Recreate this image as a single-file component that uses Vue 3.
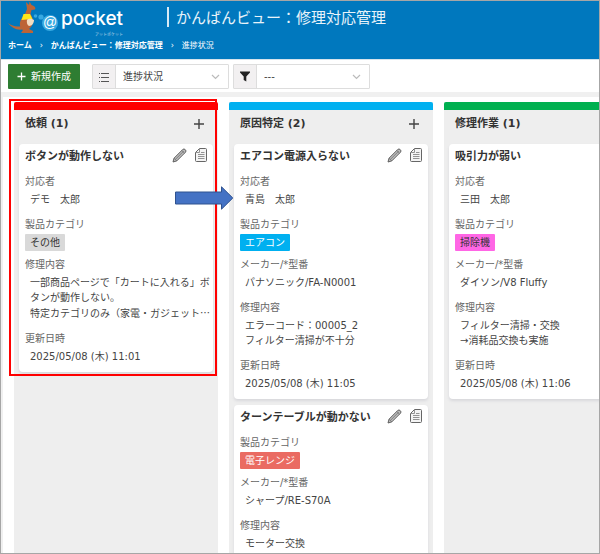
<script setup>
import { ref } from 'vue'

const groupBy = ref('進捗状況')
const filter = ref('---')

const columns = ref([
  {
    id: 1, name: '依頼', color: '#ff0000', marked: true,
    cards: [
      {
        id: 11, title: 'ボタンが動作しない',
        fields: [
          { label: '対応者', lines: ['デモ　太郎'] },
          { label: '製品カテゴリ', tag: 'その他', tagClass: 'gray' },
          { label: '修理内容', lines: ['一部商品ページで「カートに入れる」ボ', 'タンが動作しない。', '特定カテゴリのみ（家電・ガジェット'], more: true },
          { label: '更新日時', lines: ['2025/05/08 (木) 11:01'] }
        ]
      }
    ]
  },
  {
    id: 2, name: '原因特定', color: '#00b0f0',
    cards: [
      {
        id: 21, title: 'エアコン電源入らない',
        fields: [
          { label: '対応者', lines: ['青島　太郎'] },
          { label: '製品カテゴリ', tag: 'エアコン', tagClass: 'sky' },
          { label: 'メーカー/*型番', lines: ['パナソニック/FA-N0001'] },
          { label: '修理内容', lines: ['エラーコード：00005_2', 'フィルター清掃が不十分'] },
          { label: '更新日時', lines: ['2025/05/08 (木) 11:05'] }
        ]
      },
      {
        id: 22, title: 'ターンテーブルが動かない',
        fields: [
          { label: '製品カテゴリ', tag: '電子レンジ', tagClass: 'coral' },
          { label: 'メーカー/*型番', lines: ['シャープ/RE-S70A'] },
          { label: '修理内容', lines: ['モーター交換'] }
        ]
      }
    ]
  },
  {
    id: 3, name: '修理作業', color: '#00b050',
    cards: [
      {
        id: 31, title: '吸引力が弱い',
        fields: [
          { label: '対応者', lines: ['三田　太郎'] },
          { label: '製品カテゴリ', tag: '掃除機', tagClass: 'pink' },
          { label: 'メーカー/*型番', lines: ['ダイソン/V8 Fluffy'] },
          { label: '修理内容', lines: ['フィルター清掃・交換', '→消耗品交換も実施'] },
          { label: '更新日時', lines: ['2025/05/08 (木) 11:06'] }
        ]
      }
    ]
  }
])
</script>

<template>
<div class="page" lang="ja">
  <header class="header">
    <div class="header-top">
      <a href="#" class="logo">
        <svg class="kangaroo" width="36" height="34" viewBox="0 0 36 34">
          <path d="M0 22 C4 27 9 30 17 28 L18 23 C12 27 5 26 0 22Z" fill="#b9683a" />
          <path d="M18 1 L21 4 L21.5 0.5 L23.5 4 C27 5 28 7 27 8.5 L23.5 9 L22.5 13 C25 17 26 22 23 26 L21 28 L25 30 L25 32 L13 32 L15 29 C11 26 11 21 14 17 L17.5 12 L19 8Z" fill="#bd6437" />
          <path d="M15.5 13 L22 13 L24.5 18 L13.5 19Z" fill="#ffe81a" />
          <path d="M19 19 C21 17 24 18 26 19 C26 22 24 25 21 25 C19 24 18.5 21 19 19Z" fill="#f3ddc2" />
          <circle cx="27.5" cy="15" r="1.8" fill="#37a9e1" />
          <circle cx="33" cy="16" r="2.6" fill="#37a9e1" />
        </svg>
        <span class="at">@</span>
        <span class="brand">
          <span class="name">pocket</span>
          <small>アットポケット</small>
        </span>
      </a>
      <h1>かんばんビュー：修理対応管理</h1>
    </div>
    <nav class="breadcrumb">
      <a href="#"><b>ホーム</b></a><i>›</i>
      <a href="#"><b>かんばんビュー：修理対応管理</b></a><i>›</i>
      <a href="#">進捗状況</a>
    </nav>
  </header>

  <div class="toolbar">
    <button class="create">
      <svg width="9" height="9" viewBox="0 0 9 9"><path d="M4.5 0.5V8.5M0.5 4.5H8.5" stroke="#fff" stroke-width="1.3" /></svg>
      新規作成
    </button>
    <div class="picker">
      <label for="groupBy" aria-label="進捗状況">
        <svg width="12" height="12" viewBox="0 0 12 12"><path d="M3 2.5H11M3 6.5H11M3 10.5H11M1 2.5H2M1 6.5H2M1 10.5H2" stroke="#555" /></svg>
      </label>
      <select id="groupBy" v-model="groupBy">
        <option>進捗状況</option>
      </select>
      <svg class="arrow-down" width="9" height="6" viewBox="0 0 9 6"><path d="M1 1L4.5 4.5L8 1" fill="none" stroke="#bbb" stroke-width="1.2" /></svg>
    </div>
    <div class="picker">
      <label for="filter" aria-label="フィルター">
        <svg width="10" height="11" viewBox="0 0 10 11"><path d="M0 0.5H10V1.5L6.3 5.5V10.5L3.7 9V5.5L0 1.5Z" fill="#222" /></svg>
      </label>
      <select id="filter" v-model="filter">
        <option>---</option>
      </select>
      <svg class="arrow-down" width="9" height="6" viewBox="0 0 9 6"><path d="M1 1L4.5 4.5L8 1" fill="none" stroke="#bbb" stroke-width="1.2" /></svg>
    </div>
  </div>

  <main class="board">
    <section v-for="column in columns" :key="column.id" class="column">
      <div :class="{ marked: column.marked }">
        <div class="bar" :style="{ backgroundColor: column.color }"></div>
        <div class="column-head">
          <h2>{{ column.name }} ({{ column.cards.length }})</h2>
          <button class="icon" aria-label="追加">
            <svg width="10" height="10" viewBox="0 0 10 10"><path d="M5 0V10M0 5H10" stroke="#444" stroke-width="1.4" /></svg>
          </button>
        </div>
        <div class="cards">
          <article v-for="card in column.cards" :key="card.id" class="card">
            <div class="card-head">
              <h3>{{ card.title }}</h3>
              <button class="icon" aria-label="編集">
                <svg width="15" height="15" viewBox="0 0 15 15">
                  <path d="M1 14L2 10.2L10.8 1.4Q12 0.4 13.2 1.6Q14.6 2.9 13.6 4.1L4.8 12.9Z" fill="#bbb" stroke="#555" stroke-width="0.9" />
                  <path d="M3.4 11.4L11.6 3.2M2 10.2L4.8 12.9M9.8 2.5L12.5 5.2" stroke="#666" stroke-width="0.7" />
                </svg>
              </button>
              <button class="icon" aria-label="詳細">
                <svg width="12" height="14" viewBox="0 0 12 14">
                  <path d="M4.5 0.5H10.5Q11.5 0.5 11.5 1.5V12.5Q11.5 13.5 10.5 13.5H1.5Q0.5 13.5 0.5 12.5V4.5Z" fill="#f4f4f4" stroke="#666" />
                  <path d="M4.5 0.5V4.5H0.5M6 4.5H9.5M3 6.5H9.5M3 8.5H9.5M3 10.5H9.5" fill="none" stroke="#888" stroke-width="0.9" />
                </svg>
              </button>
            </div>
            <dl>
              <div v-for="field in card.fields" :key="field.label" :class="['field', { tagged: field.tag }]">
                <dt>{{ field.label }}</dt>
                <dd v-if="field.tag"><span :class="['tag', field.tagClass]">{{ field.tag }}</span></dd>
                <dd v-else class="value">
                  <div v-for="(line, index) in field.lines" :key="index">{{ line }}<span v-if="field.more && index == field.lines.length - 1" class="more">…</span></div>
                </dd>
              </div>
            </dl>
          </article>
        </div>
        <svg v-if="column.marked" class="move" width="60" height="24" viewBox="0 0 60 24">
          <path d="M1.5 6H47.5V0.8L58.8 12L47.5 23.2V18H1.5Z" fill="#4472c4" stroke="#2f528f" />
        </svg>
      </div>
    </section>
  </main>
</div>
</template>

<style>
body {
  margin: 0;
}
</style>

<style scoped>
* {
  box-sizing: border-box;
}
.page {
  display: flex;
  flex-direction: column;
  height: 100vh;
  overflow: hidden;
  border: 1px solid #a6a6a6;
  background-color: #f0f0f0;
  color: #444;
  font-family: 'DejaVu Sans', 'Noto Sans CJK JP', sans-serif;
  font-size: 10px;
  line-height: 15px;
}
h1, h2, h3, dl, dd {
  margin: 0;
}
button, select {
  font: inherit;
}
svg {
  display: block;
}
.header {
  flex: none;
  height: 58px;
  background-color: #0078be;
  color: #fff;
}
.header a {
  color: #fff;
  text-decoration: none;
}
.header-top {
  display: flex;
  align-items: center;
  height: 34px;
}
.logo {
  display: flex;
  align-items: center;
  width: 166px;
  padding-left: 7px;
}
.kangaroo {
  flex: none;
  margin-right: -2px;
}
.at {
  width: 16px;
  height: 16px;
  margin-top: 9px;
  border-radius: 8px;
  background-color: #37a9e1;
  font: 14px/15px 'Liberation Sans', sans-serif;
  text-align: center;
}
.brand {
  display: flex;
  flex-direction: column;
  align-items: flex-end;
  margin: 8px 0 0 3px;
}
.name {
  font: 500 19px/24px Inter, sans-serif;
}
.brand small {
  font: 4px/6px 'Noto Sans CJK JP', sans-serif;
  opacity: 0.7;
}
h1 {
  margin-bottom: 3px;
  padding-left: 7px;
  border-left: 2px solid #d6eaf6;
  color: #e8f3fa;
  font-family: 'Noto Sans CJK JP', sans-serif;
  font-size: 15px;
  font-weight: normal;
  line-height: 20px;
}
.breadcrumb {
  display: flex;
  padding: 3px 7px;
  font-size: 8px;
  line-height: 16px;
}
.breadcrumb i {
  width: 19px;
  font-style: normal;
  text-align: center;
}
.toolbar {
  display: flex;
  flex: none;
  height: 33px;
  padding: 4px 7px;
  border-top: 1px solid #d5e3ec;
  background-color: #fff;
}
.create {
  display: flex;
  align-items: center;
  justify-content: center;
  gap: 5px;
  width: 72px;
  height: 25px;
  margin-right: 12px;
  padding: 0;
  border: 0;
  border-radius: 1px;
  background-color: #2e7d32;
  color: #fff;
}
.picker {
  position: relative;
  display: flex;
  width: 137px;
  height: 25px;
  margin-right: 4px;
  border: 1px solid #ddd;
  border-radius: 1px;
}
.picker label {
  display: flex;
  align-items: center;
  justify-content: center;
  width: 23px;
  border-right: 1px solid #ddd;
  background-color: #f2f0f1;
}
.picker select {
  flex: 1;
  padding: 0 7px;
  border: 0;
  background-color: #fff;
  color: #444;
  appearance: none;
}
.arrow-down {
  position: absolute;
  top: 9px;
  right: 8px;
  pointer-events: none;
}
.board {
  display: flex;
  flex: 1;
  gap: 11px;
  min-height: 0;
  margin: 5px 0 0 2px;
  padding: 5px 0 0 11px;
  overflow: hidden;
  background-color: #fff;
}
.column {
  flex: none;
  width: 204px;
  background-color: #eee;
}
.bar {
  height: 8px;
  border-radius: 2px 2px 0 0;
}
.column-head {
  display: flex;
  align-items: center;
  justify-content: space-between;
  height: 34px;
  padding: 0 14px 7px 11px;
}
h2, h3 {
  color: #333;
  font-size: 11px;
  line-height: 18px;
}
.icon {
  padding: 0;
  border: 0;
  background: none;
}
.cards {
  display: flex;
  flex-direction: column;
  gap: 6px;
  padding: 0 5px;
}
.card {
  padding: 4px 6px 8px;
  border-radius: 4px;
  background-color: #fff;
  box-shadow: 0 2px 3px #d8d8dc;
}
.card-head {
  display: flex;
  gap: 8px;
  height: 26px;
}
.card-head h3 {
  flex: 1;
}
.card-head .icon {
  height: 14px;
}
dl {
  display: flex;
  flex-direction: column;
}
.field {
  margin-bottom: 10px;
}
.field.tagged {
  margin-bottom: 6px;
}
.field:last-child {
  margin-bottom: 0;
}
dt {
  color: #666;
  line-height: 16px;
}
.value {
  padding: 2px 0 0 5px;
  white-space: nowrap;
}
.more {
  font-family: 'Noto Sans CJK JP', sans-serif;
}
.tag {
  display: block;
  width: fit-content;
  margin-top: 1px;
  padding: 0 5px;
  border-radius: 1px;
  color: #333;
  line-height: 17px;
}
.gray {
  background-color: #d9d9d9;
}
.sky {
  background-color: #00b0f0;
  color: #fff;
}
.coral {
  background-color: #ea6b62;
  color: #fff;
}
.pink {
  background-color: #ff66e5;
}
.marked {
  position: relative;
}
.marked::after {
  content: '';
  position: absolute;
  inset: -3px 1px -4px -5px;
  border: 2px solid #ff0000;
  pointer-events: none;
}
.move {
  position: absolute;
  z-index: 1;
  top: 84px;
  left: 160px;
}
</style>
